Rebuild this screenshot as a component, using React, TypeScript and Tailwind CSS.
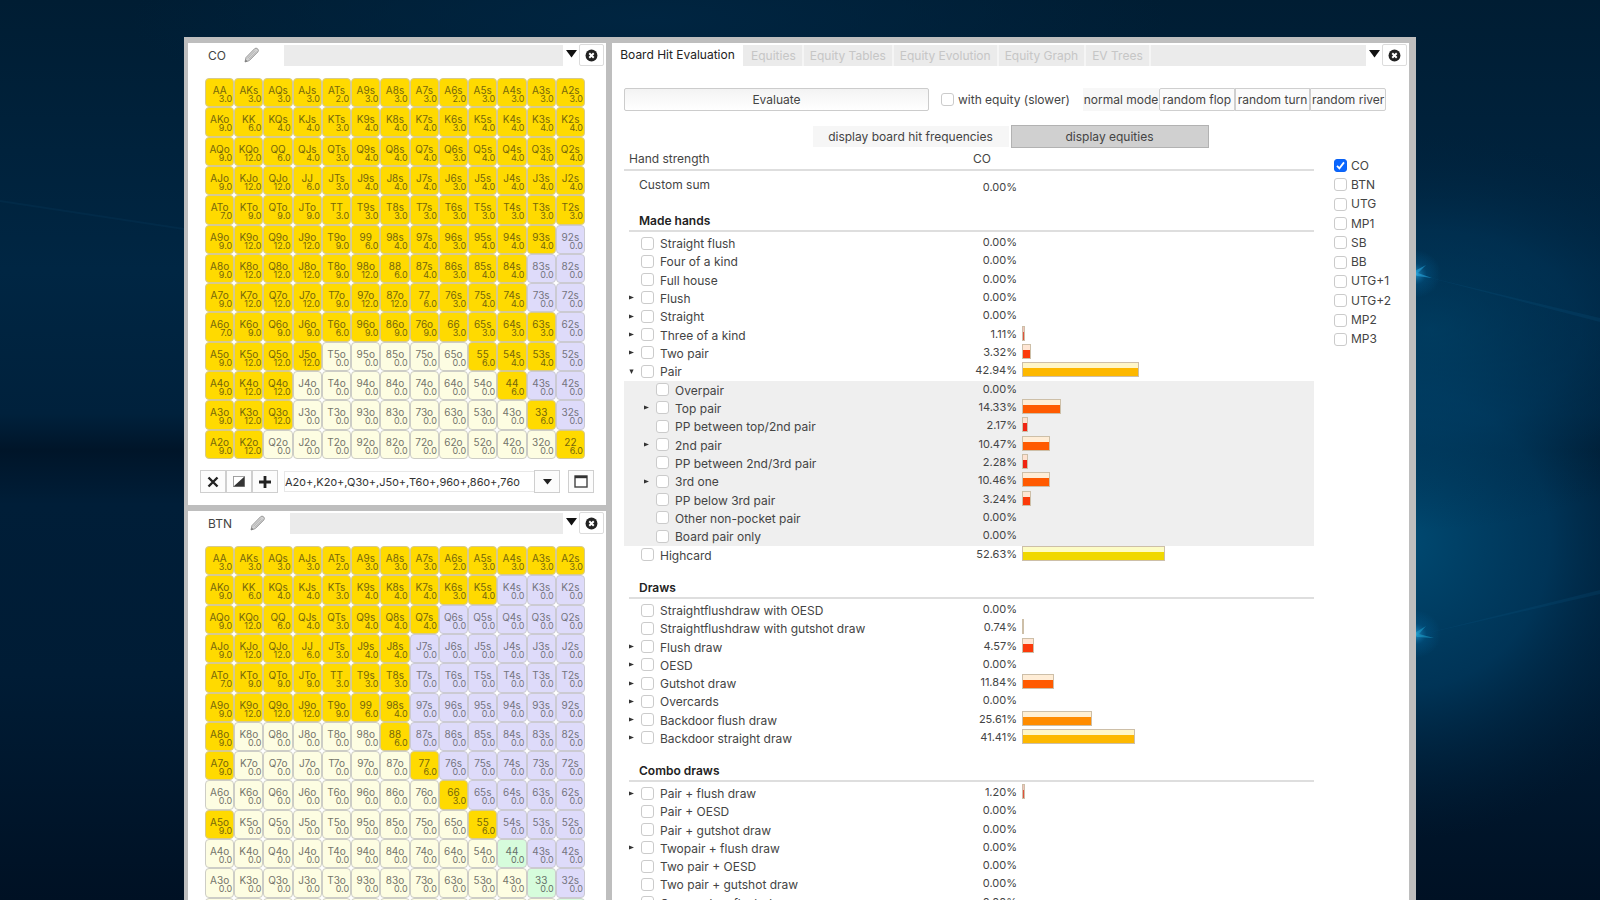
import React from "react";

const RANKS = ["A", "K", "Q", "J", "T", "9", "8", "7", "6", "5", "4", "3", "2"];

const CO_RANGE = [
  [3, 3, 3, 3, 2, 3, 3, 3, 2, 3, 3, 3, 3],
  [9, 6, 4, 4, 3, 4, 4, 4, 3, 4, 4, 4, 4],
  [9, 12, 6, 4, 3, 4, 4, 4, 3, 4, 4, 4, 4],
  [9, 12, 12, 6, 3, 4, 4, 4, 3, 4, 4, 4, 4],
  [7, 9, 9, 9, 3, 3, 3, 3, 3, 3, 3, 3, 3],
  [9, 12, 12, 12, 9, 6, 4, 4, 3, 4, 4, 4, 0],
  [9, 12, 12, 12, 9, 12, 6, 4, 3, 4, 4, 0, 0],
  [9, 12, 12, 12, 9, 12, 12, 6, 3, 4, 4, 0, 0],
  [7, 9, 9, 9, 6, 9, 9, 9, 3, 3, 3, 3, 0],
  [9, 12, 12, 12, 0, 0, 0, 0, 0, 6, 4, 4, 0],
  [9, 12, 12, 0, 0, 0, 0, 0, 0, 0, 6, 0, 0],
  [9, 12, 12, 0, 0, 0, 0, 0, 0, 0, 0, 6, 0],
  [9, 12, 0, 0, 0, 0, 0, 0, 0, 0, 0, 0, 6],
];

const BTN_RANGE = [
  [3, 3, 3, 3, 2, 3, 3, 3, 2, 3, 3, 3, 3],
  [9, 6, 4, 4, 3, 4, 4, 4, 3, 4, 0, 0, 0],
  [9, 12, 6, 4, 3, 4, 4, 4, 0, 0, 0, 0, 0],
  [9, 12, 12, 6, 3, 4, 4, 0, 0, 0, 0, 0, 0],
  [7, 9, 9, 9, 3, 3, 3, 0, 0, 0, 0, 0, 0],
  [9, 12, 12, 12, 9, 6, 4, 0, 0, 0, 0, 0, 0],
  [9, 0, 0, 0, 0, 0, 6, 0, 0, 0, 0, 0, 0],
  [9, 0, 0, 0, 0, 0, 0, 6, 0, 0, 0, 0, 0],
  [0, 0, 0, 0, 0, 0, 0, 0, 3, 0, 0, 0, 0],
  [9, 0, 0, 0, 0, 0, 0, 0, 0, 6, 0, 0, 0],
  [0, 0, 0, 0, 0, 0, 0, 0, 0, 0, 0, 0, 0],
  [0, 0, 0, 0, 0, 0, 0, 0, 0, 0, 0, 0, 0],
  [0, 0, 0, 0, 0, 0, 0, 0, 0, 0, 0, 0, 0],
];

type Row = { name: string; value: number; arrow?: "right" | "down"; child?: boolean };

const MADE_HANDS: Row[] = [
  { name: "Straight flush", value: 0 },
  { name: "Four of a kind", value: 0 },
  { name: "Full house", value: 0 },
  { name: "Flush", value: 0, arrow: "right" },
  { name: "Straight", value: 0, arrow: "right" },
  { name: "Three of a kind", value: 1.11, arrow: "right" },
  { name: "Two pair", value: 3.32, arrow: "right" },
  { name: "Pair", value: 42.94, arrow: "down" },
  { name: "Overpair", value: 0, child: true },
  { name: "Top pair", value: 14.33, arrow: "right", child: true },
  { name: "PP between top/2nd pair", value: 2.17, child: true },
  { name: "2nd pair", value: 10.47, arrow: "right", child: true },
  { name: "PP between 2nd/3rd pair", value: 2.28, child: true },
  { name: "3rd one", value: 10.46, arrow: "right", child: true },
  { name: "PP below 3rd pair", value: 3.24, child: true },
  { name: "Other non-pocket pair", value: 0, child: true },
  { name: "Board pair only", value: 0, child: true },
  { name: "Highcard", value: 52.63 },
];

const DRAWS: Row[] = [
  { name: "Straightflushdraw with OESD", value: 0 },
  { name: "Straightflushdraw with gutshot draw", value: 0.74 },
  { name: "Flush draw", value: 4.57, arrow: "right" },
  { name: "OESD", value: 0, arrow: "right" },
  { name: "Gutshot draw", value: 11.84, arrow: "right" },
  { name: "Overcards", value: 0, arrow: "right" },
  { name: "Backdoor flush draw", value: 25.61, arrow: "right" },
  { name: "Backdoor straight draw", value: 41.41, arrow: "right" },
];

const COMBO_DRAWS: Row[] = [
  { name: "Pair + flush draw", value: 1.2, arrow: "right" },
  { name: "Pair + OESD", value: 0 },
  { name: "Pair + gutshot draw", value: 0 },
  { name: "Twopair + flush draw", value: 0, arrow: "right" },
  { name: "Two pair + OESD", value: 0 },
  { name: "Two pair + gutshot draw", value: 0 },
  { name: "Overcards + flush draw", value: 0 },
  { name: "Overcards + OESD", value: 0 },
];

const TABS = ["Equities", "Equity Tables", "Equity Evolution", "Equity Graph", "EV Trees"];
const POSITIONS = ["CO", "BTN", "UTG", "MP1", "SB", "BB", "UTG+1", "UTG+2", "MP2", "MP3"];

function Wallpaper() {
  return (
    <svg className="absolute inset-0 h-full w-full" viewBox="0 0 1600 900" preserveAspectRatio="none" aria-hidden="true">
      <defs>
        <linearGradient id="base" x1="0" y1="0" x2="0" y2="1">
          <stop offset="0" stopColor="#001d33" />
          <stop offset="0.3" stopColor="#002643" />
          <stop offset="0.46" stopColor="#00213c" />
          <stop offset="0.5" stopColor="#001529" />
          <stop offset="0.56" stopColor="#001e38" />
          <stop offset="0.75" stopColor="#001c35" />
          <stop offset="1" stopColor="#001124" />
        </linearGradient>
        <radialGradient id="beam" cx="0.5" cy="0.5" r="0.5">
          <stop offset="0" stopColor="#004a72" />
          <stop offset="0.5" stopColor="#003c62" stopOpacity="0.75" />
          <stop offset="1" stopColor="#00223c" stopOpacity="0" />
        </radialGradient>
        <radialGradient id="spark" cx="0.5" cy="0.5" r="0.5">
          <stop offset="0" stopColor="#8fe6ff" />
          <stop offset="0.12" stopColor="#22a0dc" />
          <stop offset="0.45" stopColor="#046ba6" stopOpacity="0.45" />
          <stop offset="1" stopColor="#046ba6" stopOpacity="0" />
        </radialGradient>
        <radialGradient id="top" cx="0.5" cy="0.5" r="0.5">
          <stop offset="0" stopColor="#002541" />
          <stop offset="1" stopColor="#002541" stopOpacity="0" />
        </radialGradient>
      </defs>
      <rect width="1600" height="900" fill="url(#base)" />
      <ellipse cx="650" cy="20" rx="520" ry="110" fill="url(#top)" />
      <ellipse cx="1400" cy="540" rx="300" ry="300" fill="url(#beam)" />
      <ellipse cx="1430" cy="330" rx="300" ry="200" fill="url(#beam)" opacity="0.55" />
      <path d="M1415 274 L1600 318 L1600 322 Z" fill="#0b5a85" opacity="0.2" />
      <path d="M1415 636 L1600 590 L1600 594 Z" fill="#0b5a85" opacity="0.2" />
      <path d="M0 200 L184 228 L184 230 L0 202 Z" fill="#0b4468" opacity="0.2" />
      <ellipse cx="1415" cy="274" rx="26" ry="24" fill="url(#spark)" opacity="0.6" />
      <ellipse cx="1415" cy="634" rx="26" ry="24" fill="url(#spark)" opacity="0.6" />
      <path d="M1413 272 L1426 265 L1418 273 L1432 278 L1417 276 Z" fill="#2bb4ee" opacity="0.5" />
      <path d="M1413 634 L1426 626 L1419 634 L1434 638 L1417 637 Z" fill="#1fa9d6" opacity="0.5" />
    </svg>
  );
}

function PencilIcon() {
  return (
    <svg width="16" height="16" viewBox="0 0 16 16" aria-hidden="true">
      <path d="M1 15 L2 10.5 L10.5 1.8 Q12 0.4 13.6 1.8 Q15.2 3.3 13.8 5 L5.3 13.6 Z" fill="#d4d4d4" stroke="#9a9a9a" strokeWidth="1" />
      <path d="M3.4 11.4 L11 3.6 M4.8 12.4 L12.6 4.8" stroke="#a8a8a8" strokeWidth="0.8" />
      <path d="M1 15 L1.6 12.4 L3.5 14.3 Z" fill="#777" />
    </svg>
  );
}

function PanelButtons() {
  return (
    <div className="flex h-[22px] shrink-0 items-center pr-[2px]">
      <button type="button" aria-label="Panel menu" className="flex h-[22px] w-[16px] justify-center bg-white pt-[6px]">
        <svg width="11" height="8" viewBox="0 0 11 8"><path d="M0 0 H11 L5.5 7.5 Z" fill="#111" /></svg>
      </button>
      <button type="button" aria-label="Close panel" className="flex h-[22px] w-[25px] items-center justify-center rounded-[2px] border border-[#dcdcdc] bg-white">
        <svg width="13" height="13" viewBox="0 0 14 14">
          <circle cx="7" cy="7" r="6.4" fill="#222" />
          <path d="M4.6 4.6 L9.4 9.4 M9.4 4.6 L4.6 9.4" stroke="#fff" strokeWidth="2.1" />
        </svg>
      </button>
    </div>
  );
}

function Check({ id, checked = false }: { id: string; checked?: boolean }) {
  return (
    <span className="relative flex size-[13px] shrink-0">
      <input
        id={id}
        type="checkbox"
        defaultChecked={checked}
        className="peer size-[13px] appearance-none rounded-[3px] border border-[#cbcbcb] bg-white checked:border-[#0a62f5] checked:bg-[#0a66ff]"
      />
      <svg className="pointer-events-none absolute inset-0 hidden peer-checked:block" width="13" height="13" viewBox="0 0 13 13">
        <path d="M3 6.8 L5.4 9.4 L10 3.4" fill="none" stroke="#fff" strokeWidth="1.8" />
      </svg>
    </span>
  );
}

function cellColor(row: number, col: number, weight: number) {
  if (weight > 0) return "bg-[#ffda00] text-[#75660c] border-[#d6c98f]";
  if (row === col) return "bg-[#d6fcdc] text-[#66706a] border-[#cccccc]";
  if (col > row) return "bg-[#dedbfa] text-[#74747e] border-[#cbcad2]";
  return "bg-[#fdfde2] text-[#74746a] border-[#cdcdc6]";
}

function RangeGrid({ range }: { range: number[][] }) {
  return (
    <div className="mt-[12px] mr-[21px] ml-[17px] grid h-[381px] grid-cols-[repeat(13,1fr)] grid-rows-[repeat(13,1fr)]">
      {range.map((weights, row) =>
        weights.map((weight, col) => {
          const hand =
            row === col
              ? RANKS[row] + RANKS[row]
              : col > row
                ? `${RANKS[row]}${RANKS[col]}s`
                : `${RANKS[col]}${RANKS[row]}o`;
          return (
            <button
              key={hand}
              type="button"
              className={`flex min-w-0 flex-col overflow-hidden rounded-[4px] border pt-[6px] ${cellColor(row, col, weight)}`}
            >
              <span className="w-full text-center text-[10px] leading-[10px]">{hand}</span>
              <span className="w-full pr-px text-right text-[9px] leading-[8px] whitespace-nowrap">{weight.toFixed(1)}</span>
            </button>
          );
        })
      )}
    </div>
  );
}

const toolButton = "flex h-[23px] w-[26px] shrink-0 items-center justify-center border border-[#cfcfcf] bg-[#fcfcfc]";

function RangePanel({ name, range, value }: { name: string; range: number[][]; value: string }) {
  return (
    <section className="bg-white pb-[12px]">
      <header className="flex h-[23px] items-end">
        <div className="flex h-[23px] items-center gap-[18px] pr-[24px] pl-[20px] text-xs">
          <h2 className="pt-[2px] text-[#444]">{name}</h2>
          <button type="button" aria-label={`Rename ${name}`} className="pt-px"><PencilIcon /></button>
        </div>
        <div className="h-[21px] flex-1 bg-[#ebebeb]" />
        <PanelButtons />
      </header>
      <RangeGrid range={range} />
      <div className="mt-[11px] flex items-center px-[12px]">
        <button type="button" aria-label="Clear range" className={toolButton}>
          <svg width="12" height="12" viewBox="0 0 12 12"><path d="M1.5 1.5 L10.5 10.5 M10.5 1.5 L1.5 10.5" stroke="#222" strokeWidth="2.4" /></svg>
        </button>
        <button type="button" aria-label="Invert range" className={toolButton}>
          <svg width="12" height="11" viewBox="0 0 13 12">
            <rect x="0.5" y="0.5" width="12" height="11" fill="#fff" stroke="#999" />
            <path d="M12.5 0.5 V11.5 H0.5 Z" fill="#333" />
          </svg>
        </button>
        <button type="button" aria-label="Add hands" className={toolButton}>
          <svg width="12" height="12" viewBox="0 0 12 12"><path d="M6 0 V12 M0 6 H12" stroke="#222" strokeWidth="2.8" /></svg>
        </button>
        <input
          aria-label={`${name} range`}
          defaultValue={value}
          className="ml-[6px] h-[21px] min-w-0 flex-1 border-y border-l border-[#e8e8e8] bg-white text-[11px] text-[#333]"
        />
        <button type="button" aria-label="Range history" className={toolButton}>
          <svg width="9" height="6" viewBox="0 0 9 6"><path d="M0 0 H9 L4.5 5.5 Z" fill="#222" /></svg>
        </button>
        <button type="button" aria-label="Open range window" className={`ml-[8px] ${toolButton}`}>
          <svg width="14" height="13" viewBox="0 0 14 13">
            <rect x="1" y="1" width="12" height="11" fill="#fff" stroke="#444" strokeWidth="1.4" />
            <path d="M1 2 H13" stroke="#333" strokeWidth="2.4" />
          </svg>
        </button>
      </div>
    </section>
  );
}

function barColor(value: number) {
  if (value > 50) return "from-[#fdfcc4] to-[#f0d800]";
  if (value > 40) return "from-[#fff6c8] to-[#fdb800]";
  if (value > 20) return "from-[#fff0d4] to-[#ff8c00]";
  if (value > 10) return "from-[#ffedd6] to-[#ff5a00]";
  if (value > 3) return "from-[#ffe6d4] to-[#fb3a0a]";
  if (value > 2) return "from-[#ffe2d0] to-[#f02410]";
  return "from-[#f2c4bc] to-[#e0503c]";
}

function Arrow({ direction, child = false }: { direction?: "right" | "down"; child?: boolean }) {
  const box = child ? "ml-[20px] w-[12px]" : "ml-[5px] w-[12px]";
  if (!direction) return <span className={`shrink-0 ${box}`} />;
  return (
    <button type="button" aria-label={direction === "down" ? "Collapse" : "Expand"} className={`flex h-[14px] shrink-0 items-center ${box}`}>
      <svg width="5" height="5" viewBox="0 0 6 6">
        <path d={direction === "down" ? "M0.5 0.5 H5.5 L3 6 Z" : "M0 0.5 L6 3 L0 5.5 Z"} fill="#333" />
      </svg>
    </button>
  );
}

function HandSection({ title, rows, height }: { title: string; rows: Row[]; height: string }) {
  return (
    <section>
      <div className="ml-[5px] pt-[15px] pb-[2px]">
        <h3 className="h-[20px] border-b-2 border-[#dedede] pl-[10px] leading-[18px] font-semibold text-[#222]">{title}</h3>
      </div>
      <table className={`w-full table-fixed border-collapse ${height}`}>
        <tbody>
          {rows.map((row) => (
            <tr key={row.name} className={row.child ? "bg-[#efefef]" : ""}>
              <th scope="row" className="w-[300px] p-0 text-left align-top font-normal">
                <div className="flex h-[18px] items-center">
                  <Arrow direction={row.arrow} child={row.child} />
                  <Check id={row.name} />
                  <label htmlFor={row.name} className="pt-[2px] pl-[6px] leading-[16px] whitespace-nowrap">{row.name}</label>
                </div>
              </th>
              <td className="w-[93px] p-0 text-right align-top text-[11px] leading-[17px]">{row.value.toFixed(2)}%</td>
              <td className="p-0 pl-[5px] align-top">
                {row.value > 0 && (
                  <div
                    className={`h-[15px] border border-[#cdbfa8] bg-linear-to-b from-40% to-40% ${barColor(row.value)}`}
                    style={{ width: Math.round(row.value * 2.72) }}
                  />
                )}
              </td>
            </tr>
          ))}
        </tbody>
      </table>
    </section>
  );
}

const modeButton = "h-[23px] flex-1 border border-[#cfcfcf] bg-[#fbfbfb] whitespace-nowrap";

function BoardHitEvaluation() {
  return (
    <main className="min-w-0 flex-1 bg-white text-xs text-[#444]">
      <header className="flex h-[23px] items-end">
        <button type="button" className="h-[23px] w-[131px] shrink-0 bg-white text-[#222]">Board Hit Evaluation</button>
        <nav className="flex h-[21px] min-w-0 flex-1 bg-[#ebebeb] pl-[2px]">
          {TABS.map((tab) => (
            <button key={tab} type="button" className="border-r-2 border-[#f5f5f5] px-[6px] whitespace-nowrap text-[#c6c6c6]">{tab}</button>
          ))}
        </nav>
        <PanelButtons />
      </header>

      <div className="px-[12px]">
        <div className="mt-[22px] flex items-center pr-[11px]">
          <button type="button" className="h-[23px] w-[305px] shrink-0 rounded-[2px] border border-[#cccccc] bg-linear-to-b from-[#f3f3f3] to-white">Evaluate</button>
          <div className="ml-[12px] flex items-center gap-[4px]">
            <Check id="with-equity" />
            <label htmlFor="with-equity" className="whitespace-nowrap">with equity (slower)</label>
          </div>
          <div className="ml-auto flex w-[303px]">
            <button type="button" className="h-[23px] w-[76px] bg-[#f7f7f7] whitespace-nowrap">normal mode</button>
            <button type="button" className={`rounded-l-[2px] ${modeButton}`}>random flop</button>
            <button type="button" className={modeButton}>random turn</button>
            <button type="button" className={`rounded-r-[2px] ${modeButton}`}>random river</button>
          </div>
        </div>

        <div className="mt-[14px] flex items-center justify-center gap-[2px]">
          <button type="button" className="h-[21px] w-[196px] bg-[#f6f6f6]">display board hit frequencies</button>
          <button type="button" className="h-[23px] w-[198px] border border-[#b2b2b2] bg-[#d0d0d0]">display equities</button>
        </div>

        <div className="flex">
          <div className="min-w-0 flex-1">
            <div className="flex h-[23px] border-b-2 border-[#dedede] pl-[5px] leading-[21px]">
              <span className="w-[344px]">Hand strength</span>
              <span>CO</span>
            </div>
            <div className="flex h-[26px] pl-[15px]">
              <span className="w-[285px] pt-[4px] leading-[20px]">Custom sum</span>
              <span className="w-[93px] pt-[6px] text-right text-[11px] leading-[20px]">0.00%</span>
            </div>
            <HandSection title="Made hands" rows={MADE_HANDS} height="h-[330px]" />
            <HandSection title="Draws" rows={DRAWS} height="h-[146px]" />
            <HandSection title="Combo draws" rows={COMBO_DRAWS} height="h-[146px]" />
          </div>
          <ul className="mt-[8px] ml-[20px] grid h-[193px] w-[63px] shrink-0 auto-rows-fr">
            {POSITIONS.map((position) => (
              <li key={position} className="flex items-center gap-[4px]">
                <Check id={`position-${position}`} checked={position === "CO"} />
                <label htmlFor={`position-${position}`}>{position}</label>
              </li>
            ))}
          </ul>
        </div>
      </div>
    </main>
  );
}

export default function App() {
  return (
    <div className="relative h-screen overflow-hidden bg-[#001e35] font-[Inter,'Liberation_Sans',sans-serif]">
      <Wallpaper />
      <div className="relative mx-auto mt-[37px] flex w-[77%] gap-[6px] border-t-6 border-r-7 border-l-4 border-[#bebebe] bg-[#bebebe]">
        <div className="flex w-[418px] shrink-0 flex-col gap-[6px]">
          <RangePanel name="CO" range={CO_RANGE} value="A2o+,K2o+,Q3o+,J5o+,T6o+,96o+,86o+,76o" />
          <RangePanel name="BTN" range={BTN_RANGE} value="A5o,A7o+,K9o+,Q9o+,J9o+,T9o" />
        </div>
        <BoardHitEvaluation />
      </div>
    </div>
  );
}
